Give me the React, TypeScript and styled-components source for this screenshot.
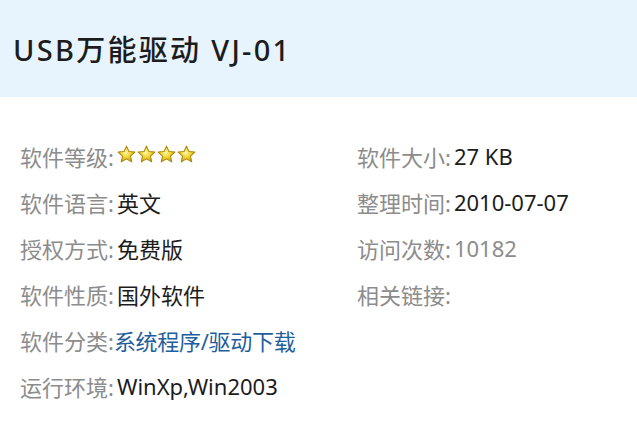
import React from 'react';
import styled, { createGlobalStyle } from 'styled-components';

const GlobalStyle = createGlobalStyle`
  html, body {
    margin: 0;
    padding: 0;
    background: #ffffff;
    font-family: "Noto Sans", "Noto Sans CJK SC", sans-serif;
  }
`;

const Star = () => (
  <svg width="19" height="19" viewBox="0 0 20 20">
    <defs>
      <radialGradient id="starFill" cx="45%" cy="40%" r="60%">
        <stop offset="0%" stopColor="#fff7a8" />
        <stop offset="55%" stopColor="#f2d12a" />
        <stop offset="100%" stopColor="#c9a20c" />
      </radialGradient>
    </defs>
    <path
      d="M10 1.2 L12.6 6.8 L18.8 7.4 L14.2 11.6 L15.5 17.8 L10 14.6 L4.5 17.8 L5.8 11.6 L1.2 7.4 L7.4 6.8 Z"
      fill="url(#starFill)"
      stroke="#a8870e"
      strokeWidth="1.1"
      strokeLinejoin="round"
    />
  </svg>
);

type Info = { label: string; value?: React.ReactNode; tone?: 'dark' | 'muted' | 'link' };

const left: Info[] = [
  { label: '软件等级', value: 'stars' },
  { label: '软件语言', value: '英文' },
  { label: '授权方式', value: '免费版' },
  { label: '软件性质', value: '国外软件' },
  { label: '软件分类', value: '系统程序/驱动下载', tone: 'link' },
  { label: '运行环境', value: 'WinXp,Win2003' },
];

const right: Info[] = [
  { label: '软件大小', value: '27 KB' },
  { label: '整理时间', value: '2010-07-07' },
  { label: '访问次数', value: '10182', tone: 'muted' },
  { label: '相关链接' },
];

const App = () => {
  const renderRow = (item: Info) => (
    <Row key={item.label}>
      <Label $tight={item.tone === 'link'}>{item.label}:</Label>
      {item.value === 'stars' ? (
        <Stars>
          <Star />
          <Star />
          <Star />
          <Star />
        </Stars>
      ) : (
        item.value && <Value $tone={item.tone || 'dark'}>{item.value}</Value>
      )}
    </Row>
  );

  return (
    <>
      <GlobalStyle />
      <Page>
        <Header>
          <Title>USB万能驱动 VJ-01</Title>
        </Header>
        <Details>
          <Column>{left.map(renderRow)}</Column>
          <Column>{right.map(renderRow)}</Column>
        </Details>
      </Page>
    </>
  );
};

const Page = styled.div`
  width: 637px;
  height: 421px;
  overflow: hidden;
  background: #ffffff;
`;

const Header = styled.div`
  height: 97px;
  background: #e8f4fd;
  display: flex;
  align-items: center;
  padding-left: 13px;
  padding-bottom: 2px;
  box-sizing: border-box;
`;

const Title = styled.h1`
  margin: 0;
  font-size: 29px;
  font-weight: 500;
  color: #1c1c1c;
  letter-spacing: 2.3px;
`;

const Details = styled.div`
  display: grid;
  grid-template-columns: 337px 1fr;
  padding: 36px 0 0 20px;
`;

const Column = styled.div`
  display: flex;
  flex-direction: column;
`;

const Row = styled.div`
  height: 46px;
  display: flex;
  align-items: center;
  font-size: 22px;
  white-space: nowrap;
`;

const Label = styled.span<{ $tight?: boolean }>`
  color: #8c8c8c;
  margin-right: ${(p) => (p.$tight ? '0' : '3px')};
`;

const Value = styled.span<{ $tone: 'dark' | 'muted' | 'link' }>`
  color: ${(p) => (p.$tone === 'link' ? '#1f5f9e' : p.$tone === 'muted' ? '#8c8c8c' : '#1c1c1c')};
  letter-spacing: ${(p) => (p.$tone === 'link' ? '-0.3px' : '0')};
`;

const Stars = styled.span`
  display: inline-flex;
  gap: 1px;
  margin-top: -4px;
`;

export default App;
